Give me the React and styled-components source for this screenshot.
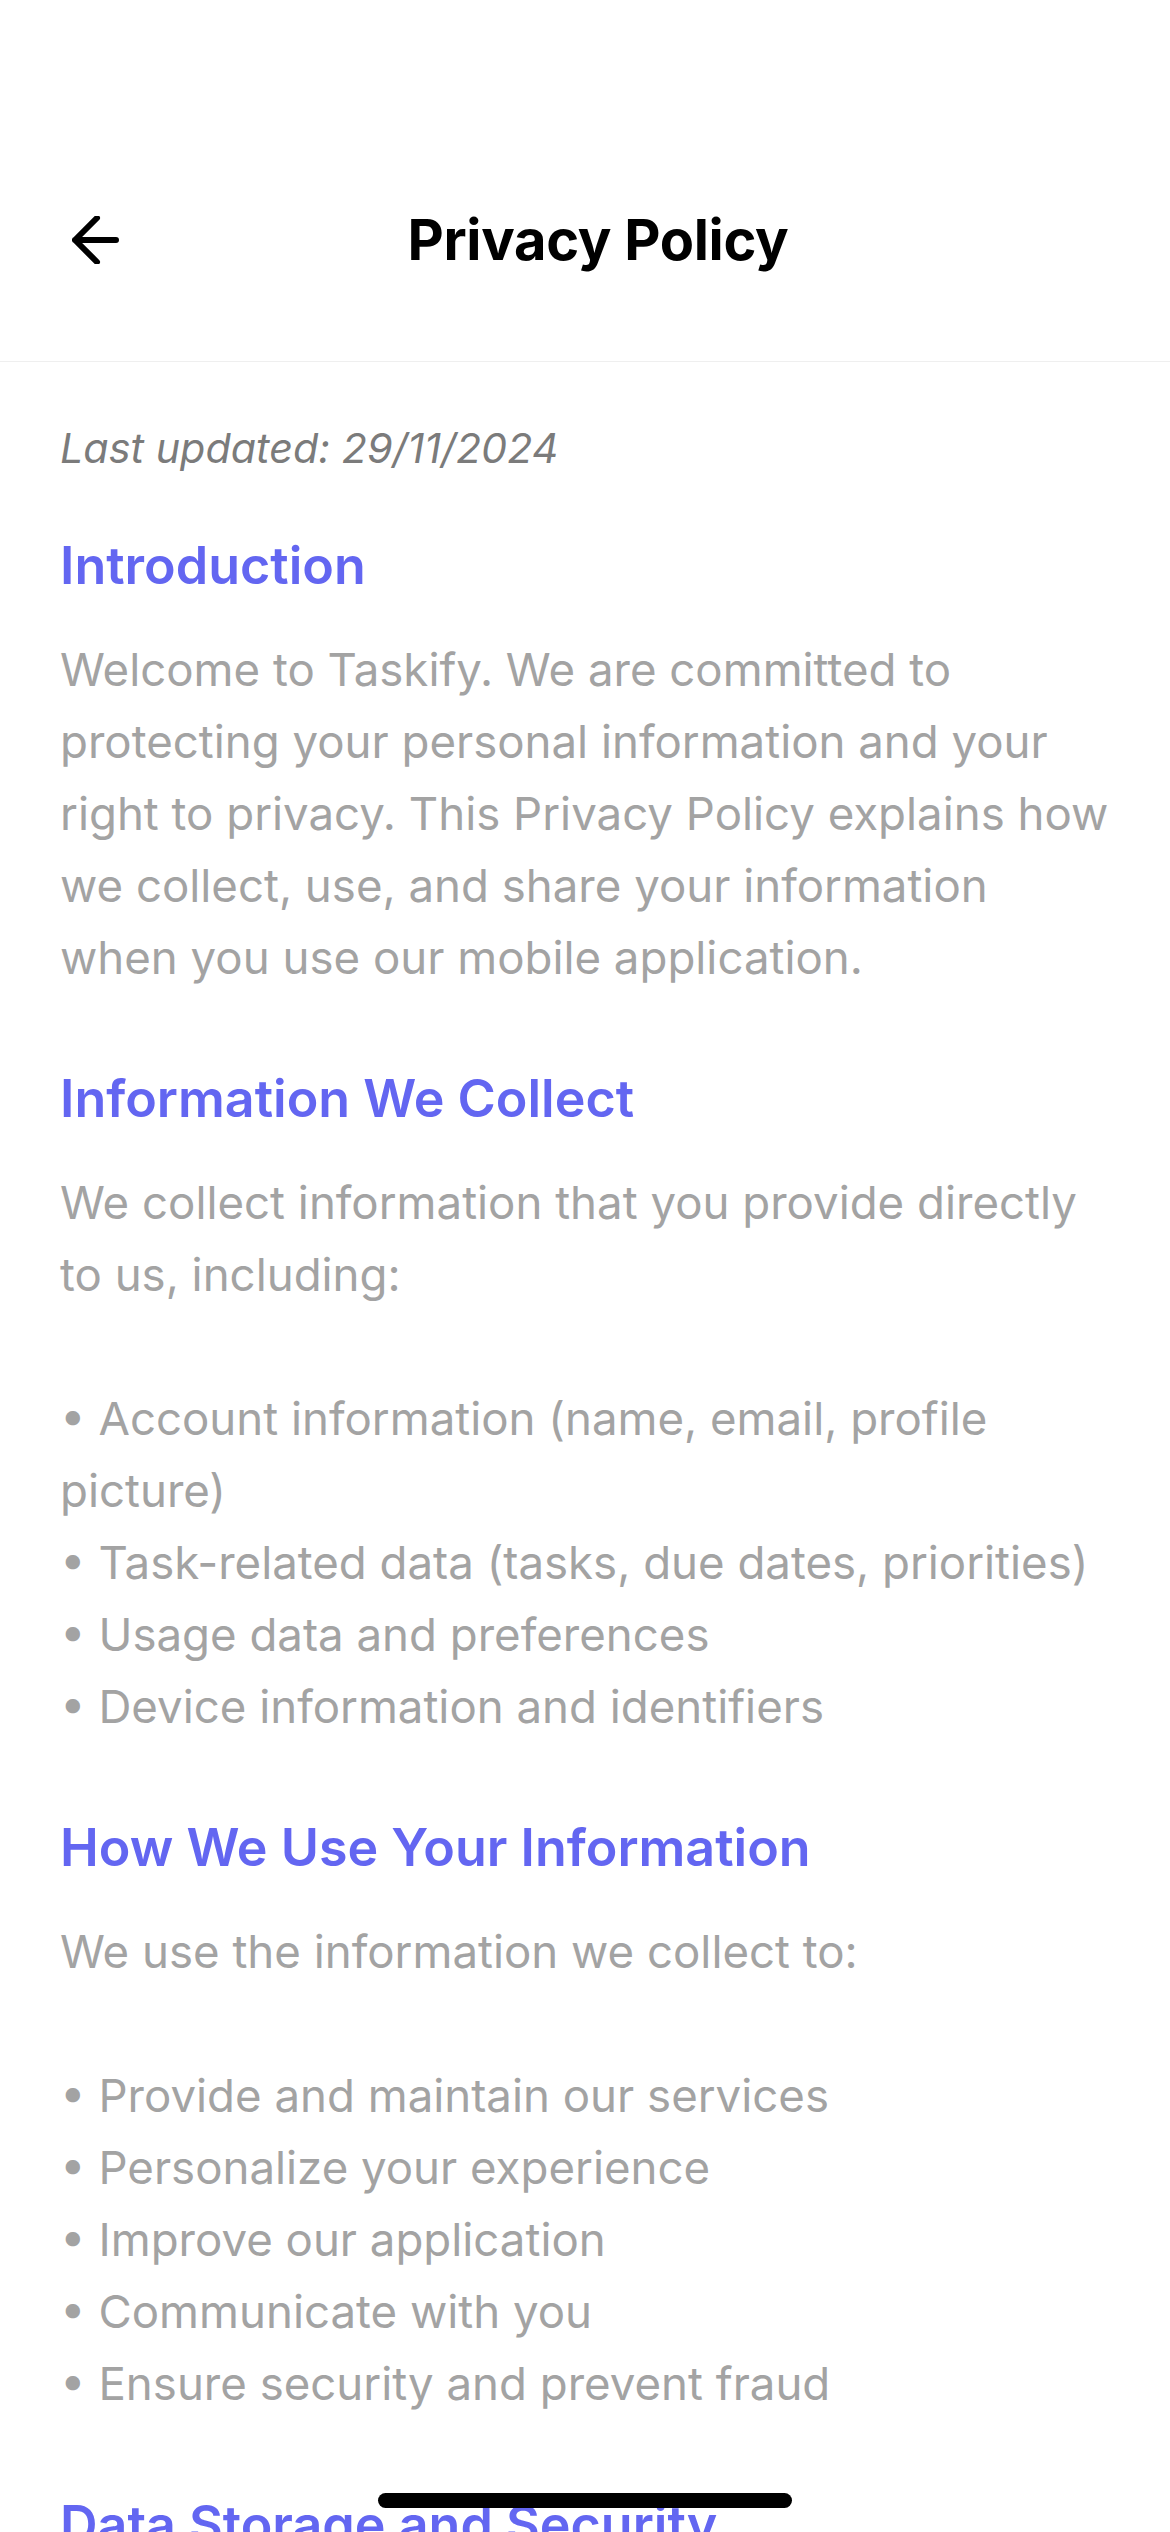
import styled, { createGlobalStyle } from "styled-components";

const GlobalStyle = createGlobalStyle`
  html, body {
    margin: 0;
    padding: 0;
    background: #ffffff;
  }
  body {
    font-family: Inter, "Noto Sans", "Liberation Sans", sans-serif;
    -webkit-font-smoothing: antialiased;
  }
`;

const Screen = styled.div`
  position: relative;
  width: 1170px;
  height: 2532px;
  overflow: hidden;
  background: #ffffff;
  display: flex;
  flex-direction: column;
`;

const Header = styled.header`
  display: flex;
  align-items: center;
  height: 120px;
  padding: 180px 60px 61px;
  border-bottom: 1px solid #efefef;
`;

const BackButton = styled.button`
  width: 120px;
  height: 120px;
  padding: 0 0 0 12px;
  border: none;
  background: transparent;
  display: flex;
  align-items: center;
  cursor: pointer;
`;

const Title = styled.h1`
  flex: 1;
  margin: 0;
  text-align: center;
  font-size: 56px;
  font-weight: 700;
  letter-spacing: -0.3px;
  color: #000000;
`;

const HeaderSpacer = styled.div`
  width: 94px;
`;

const Content = styled.main`
  flex: 1;
  padding: 61px 60px 0;
`;

const Updated = styled.p`
  margin: 0 0 60px;
  font-size: 41.3px;
  line-height: 50px;
  font-style: italic;
  color: #7b7b7b;
`;

const Section = styled.section`
  margin-bottom: 72px;
`;

const Heading = styled.h2`
  margin: 0 0 36px;
  font-size: 52px;
  line-height: 65px;
  font-weight: 600;
  color: #6366f1;
`;

const Body = styled.p`
  margin: 0;
  font-size: 45.6px;
  line-height: 72px;
  color: #a3a3a3;
  white-space: pre-line;
`;

const HomeIndicator = styled.div`
  position: absolute;
  left: 378px;
  bottom: 24px;
  width: 414px;
  height: 15px;
  border-radius: 8px;
  background: #000000;
`;

const sections = [
  {
    title: "Introduction",
    text: "Welcome to Taskify. We are committed to protecting your personal information and your right to privacy. This Privacy Policy explains how we collect, use, and share your information when you use our mobile application.",
  },
  {
    title: "Information We Collect",
    text: "We collect information that you provide directly to us, including:\n\n• Account information (name, email, profile picture)\n• Task-related data (tasks, due dates, priorities)\n• Usage data and preferences\n• Device information and identifiers",
  },
  {
    title: "How We Use Your Information",
    text: "We use the information we collect to:\n\n• Provide and maintain our services\n• Personalize your experience\n• Improve our application\n• Communicate with you\n• Ensure security and prevent fraud",
  },
  {
    title: "Data Storage and Security",
    text: "We implement appropriate technical and organizational measures to protect your personal information against unauthorized access, alteration, disclosure, or destruction.",
  },
];

const BackArrow = () => (
  <svg width="48" height="48" viewBox="0 0 48 48" fill="none">
    <path
      d="M25 2 L3 24 L25 46 M3 24 L44 24"
      stroke="#000"
      strokeWidth="6"
      strokeLinecap="round"
      strokeLinejoin="round"
    />
  </svg>
);

const App = () => {
  return <Screen>
    <GlobalStyle />
    <Header>
      <BackButton aria-label="Back">
        <BackArrow />
      </BackButton>
      <Title>Privacy Policy</Title>
      <HeaderSpacer />
    </Header>
    <Content>
      <Updated>Last updated: 29/11/2024</Updated>
      {
        sections.map(section => (
          <Section key={section.title}>
            <Heading>{section.title}</Heading>
            <Body>{section.text}</Body>
          </Section>
        ))
      }
    </Content>
    <HomeIndicator />
  </Screen>
}

export default App;
